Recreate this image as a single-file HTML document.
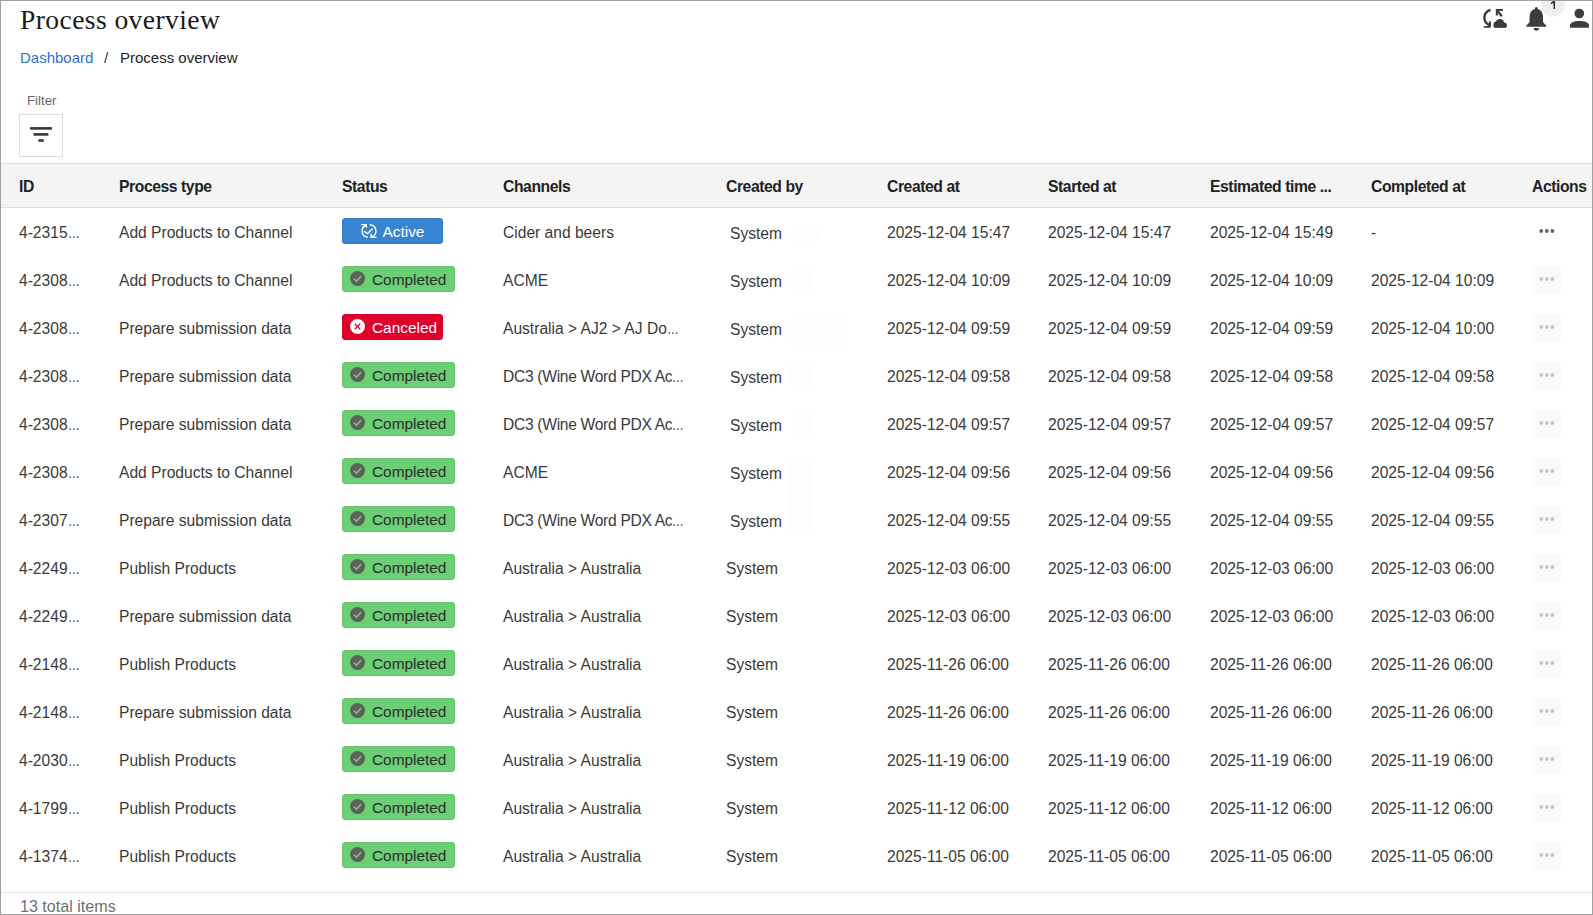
<!DOCTYPE html>
<html><head><meta charset="utf-8">
<style>
*{box-sizing:border-box;margin:0;padding:0}
html,body{width:1593px;height:915px;overflow:hidden;background:#fff}
body{font-family:"Liberation Sans",sans-serif;color:#333;position:relative}
.frame{position:absolute;z-index:10;left:0;top:0;width:1593px;height:915px;border:1px solid #a0a0a0}
.abs{position:absolute;white-space:nowrap}
.title{left:20px;top:3px;font-family:"Liberation Serif",serif;font-size:27.6px;letter-spacing:0.4px;color:#1a1a1a;line-height:34px}
.bc{top:48px;font-size:15px;line-height:20px}
.filterlbl{left:27px;top:92px;font-size:13.3px;color:#666;line-height:18px}
.fbtn{left:19px;top:114px;width:44px;height:43px;border:1px solid #dcdcdc;background:#fff}
.fbtn i{position:absolute;height:2px;background:#3a3a3a}
.thead{left:1px;top:163px;width:1591px;height:45px;background:#f4f4f4;border-top:1px solid #dedede;border-bottom:1px solid #dedede}
.th{top:176px;font-size:15.7px;letter-spacing:-0.42px;font-weight:bold;color:#222;line-height:22px}
.td{font-size:15.6px;color:#3a3a3a;line-height:22px}
.badge{height:26px;border-radius:3px;font-size:15.4px;line-height:24px;padding-left:18px}
.badge .bi{position:absolute;left:18px;top:5px}
.active .bi{left:17px;top:4px}
.badge span{position:absolute;left:38px;top:1px}
.active{background:#3884d0;border:1px solid #2f7bc9;color:#fff}
.active span{left:39.5px}
.done{background:#6ccf76;border:1px solid #63c76d;color:#2b2b2b}
.done .bi{left:7px;top:4px}
.done span{left:29px}
.cancel{background:#e0002b;border:1px solid #d80029;color:#fff}
.cancel .bi{left:7px;top:4px}
.cancel span{left:29px}
.dots{width:30px;height:30px;border-radius:3px}
.dots i{position:absolute;top:13px;width:4px;height:4px;border-radius:50%}
.dots i:nth-child(1){left:9px}.dots i:nth-child(2){left:14px}.dots i:nth-child(3){left:19px}
.dots.dark i{background:#333}
.dots.light{background:#fafafa}
.dots.light i{background:#c8c8c8}
.foot{left:1px;top:892px;width:1591px;height:1px;background:#e0e0e0}
.total{left:20px;top:896px;font-size:16.1px;color:#707070;line-height:20px}
.el{display:inline-block;transform:scaleX(0.75);transform-origin:0 0}
.dc3{letter-spacing:-0.3px}
</style></head><body>

<div class="frame"></div>
<div class="abs title">Process overview</div>
<div class="abs bc" style="left:20px;color:#3371c9">Dashboard</div>
<div class="abs bc" style="left:104px;color:#333">/</div>
<div class="abs bc" style="left:120px;color:#222">Process overview</div>
<div class="abs filterlbl">Filter</div>
<div class="abs fbtn"></div><svg class="abs" style="left:0;top:0" width="70" height="160"><g fill="#363636"><rect x="30.1" y="127.1" width="21.8" height="2.6"/><rect x="33.5" y="133.1" width="14.9" height="2.6"/><rect x="38.4" y="139.2" width="5.3" height="2.6"/></g></svg>
<div class="abs thead"></div>
<div class="abs th" style="left:19px">ID</div>
<div class="abs th" style="left:119px">Process type</div>
<div class="abs th" style="left:342px">Status</div>
<div class="abs th" style="left:503px">Channels</div>
<div class="abs th" style="left:726px">Created by</div>
<div class="abs th" style="left:887px">Created at</div>
<div class="abs th" style="left:1048px">Started at</div>
<div class="abs th" style="left:1210px">Estimated time ...</div>
<div class="abs th" style="left:1371px">Completed at</div>
<div class="abs th" style="left:1532px">Actions</div>
<div class="abs foot"></div>
<div class="abs total">13 total items</div>
<svg class="abs" style="left:1478px;top:0px" width="34" height="34" viewBox="0 0 34 34">
<g fill="#3c3c3c">
<path d="M12.6 10 A7.9 7.9 0 0 0 10.8 24.8" fill="none" stroke="#3c3c3c" stroke-width="2.4"/>
<path d="M5.9 25.9 H10.9 V21.2 H12.8 V27.8 H5.9 Z"/>
<path d="M9.5 25.9 L12.8 22.5 V25.9 Z"/>
<path d="M17.8 9.1 H24.9 V11 H19.8 V15.6 H17.8 Z"/>
<path d="M19.2 10.6 L23.8 16.3" fill="none" stroke="#3c3c3c" stroke-width="2.3"/>
<circle cx="21.9" cy="23.3" r="4.3"/>
<circle cx="18.6" cy="24.6" r="3.1"/>
<circle cx="26.2" cy="25.1" r="2.6"/>
<rect x="15.5" y="24.6" width="13.3" height="3.1" rx="1.4"/>
</g>
</svg>
<svg class="abs" style="left:1520px;top:0px" width="73" height="36" viewBox="0 0 73 36">
<circle cx="33.1" cy="4.5" r="12" fill="#efefef"/>
<path d="M33.6 1 H35 V8.9 H33.6 V2.9 L30.8 4.2 V2.7 Z" fill="#222"/>
<g fill="#3c3c3c">
<path d="M16.3 7 C17.2 7 17.7 7.8 17.8 9.1 C21 9.9 22.9 12.6 23 16.5 V21.5 C23 22.5 24.5 24 26.1 25.3 V26.8 H6.5 V25.3 C8.1 24 9.6 22.5 9.6 21.5 V16.5 C9.7 12.6 11.6 9.9 14.8 9.1 C14.9 7.8 15.4 7 16.3 7 Z"/>
<path d="M13.7 28 H19 A2.65 2.65 0 0 1 13.7 28 Z"/>
<circle cx="59.3" cy="13.5" r="4.8"/>
<path d="M50 27.7 V25.5 C50 22.5 54.5 21.1 59.5 21.1 C64.5 21.1 69 22.5 69 25.5 V27.7 Z"/>
</g>
</svg>

<div class="abs td" style="left:19px;top:222px">4-2315<span class='el'>…</span></div>
<div class="abs td" style="left:119px;top:222px">Add Products to Channel</div>
<div class="abs badge active" style="left:342px;top:218px;width:101px"><svg class="bi" width="18" height="16" viewBox="0 0 18 16"><g fill="none" stroke="#fff" stroke-width="1.5"><path d="M6.4 2.1A6.2 6.2 0 0 0 7.9 14.2"/><path d="M9.6 1.7A6.2 6.2 0 0 1 11.3 13.9"/><path d="M4 8.3L7.6 10.5L12.7 5.6" stroke-width="1.4"/></g><path d="M1.2 0.9H7V4.7H5.6V2.3H1.2Z" fill="#fff"/><path d="M10.4 10.7H11.9V13.5H16.4V15H10.4Z" fill="#fff"/></svg><span>Active</span></div>
<div class="abs td" style="left:503px;top:222px">Cider and beers</div>
<div class="abs td" style="left:730px;top:223px">System</div>
<div class="abs td" style="left:887px;top:222px">2025-12-04 15:47</div>
<div class="abs td" style="left:1048px;top:222px">2025-12-04 15:47</div>
<div class="abs td" style="left:1210px;top:222px">2025-12-04 15:49</div>
<div class="abs td" style="left:1371px;top:222px">-</div>
<svg class="abs" style="left:1532px;top:218px" width="29" height="28"><g fill="#646464"><circle cx="9.2" cy="13" r="1.9"/><circle cx="14.8" cy="13" r="1.9"/><circle cx="20.4" cy="13" r="1.9"/></g></svg>
<div class="abs td" style="left:19px;top:270px">4-2308<span class='el'>…</span></div>
<div class="abs td" style="left:119px;top:270px">Add Products to Channel</div>
<div class="abs badge done" style="left:342px;top:266px;width:113px"><svg class="bi" width="15" height="15" viewBox="0 0 15 15"><circle cx="7.5" cy="7.5" r="7.5" fill="#5f5f5f"/><path d="M3.9 7.6l2.5 2.5 4.8-4.8" fill="none" stroke="#6ccf76" stroke-width="1.6"/></svg><span>Completed</span></div>
<div class="abs td" style="left:503px;top:270px">ACME</div>
<div class="abs td" style="left:730px;top:271px">System</div>
<div class="abs td" style="left:887px;top:270px">2025-12-04 10:09</div>
<div class="abs td" style="left:1048px;top:270px">2025-12-04 10:09</div>
<div class="abs td" style="left:1210px;top:270px">2025-12-04 10:09</div>
<div class="abs td" style="left:1371px;top:270px">2025-12-04 10:09</div>
<svg class="abs" style="left:1532px;top:266px" width="29" height="28"><rect x="0" y="0" width="29" height="28" rx="3" fill="#fafafa"/><g fill="#c6c6c6"><circle cx="9.2" cy="13" r="1.9"/><circle cx="14.8" cy="13" r="1.9"/><circle cx="20.4" cy="13" r="1.9"/></g></svg>
<div class="abs td" style="left:19px;top:318px">4-2308<span class='el'>…</span></div>
<div class="abs td" style="left:119px;top:318px">Prepare submission data</div>
<div class="abs badge cancel" style="left:342px;top:314px;width:101px"><svg class="bi" width="15" height="15" viewBox="0 0 15 15"><circle cx="7.5" cy="7.5" r="7.5" fill="#fff"/><path d="M4.8 4.8l5.4 5.4M10.2 4.8l-5.4 5.4" fill="none" stroke="#e0002b" stroke-width="1.3"/></svg><span>Canceled</span></div>
<div class="abs td" style="left:503px;top:318px">Australia &gt; AJ2 &gt; AJ Do<span class='el'>…</span></div>
<div class="abs td" style="left:730px;top:319px">System</div>
<div class="abs td" style="left:887px;top:318px">2025-12-04 09:59</div>
<div class="abs td" style="left:1048px;top:318px">2025-12-04 09:59</div>
<div class="abs td" style="left:1210px;top:318px">2025-12-04 09:59</div>
<div class="abs td" style="left:1371px;top:318px">2025-12-04 10:00</div>
<svg class="abs" style="left:1532px;top:314px" width="29" height="28"><rect x="0" y="0" width="29" height="28" rx="3" fill="#fafafa"/><g fill="#c6c6c6"><circle cx="9.2" cy="13" r="1.9"/><circle cx="14.8" cy="13" r="1.9"/><circle cx="20.4" cy="13" r="1.9"/></g></svg>
<div class="abs td" style="left:19px;top:366px">4-2308<span class='el'>…</span></div>
<div class="abs td" style="left:119px;top:366px">Prepare submission data</div>
<div class="abs badge done" style="left:342px;top:362px;width:113px"><svg class="bi" width="15" height="15" viewBox="0 0 15 15"><circle cx="7.5" cy="7.5" r="7.5" fill="#5f5f5f"/><path d="M3.9 7.6l2.5 2.5 4.8-4.8" fill="none" stroke="#6ccf76" stroke-width="1.6"/></svg><span>Completed</span></div>
<div class="abs td" style="left:503px;top:366px"><span class='dc3'>DC3 (Wine Word PDX Ac</span><span class='el'>…</span></div>
<div class="abs td" style="left:730px;top:367px">System</div>
<div class="abs td" style="left:887px;top:366px">2025-12-04 09:58</div>
<div class="abs td" style="left:1048px;top:366px">2025-12-04 09:58</div>
<div class="abs td" style="left:1210px;top:366px">2025-12-04 09:58</div>
<div class="abs td" style="left:1371px;top:366px">2025-12-04 09:58</div>
<svg class="abs" style="left:1532px;top:362px" width="29" height="28"><rect x="0" y="0" width="29" height="28" rx="3" fill="#fafafa"/><g fill="#c6c6c6"><circle cx="9.2" cy="13" r="1.9"/><circle cx="14.8" cy="13" r="1.9"/><circle cx="20.4" cy="13" r="1.9"/></g></svg>
<div class="abs td" style="left:19px;top:414px">4-2308<span class='el'>…</span></div>
<div class="abs td" style="left:119px;top:414px">Prepare submission data</div>
<div class="abs badge done" style="left:342px;top:410px;width:113px"><svg class="bi" width="15" height="15" viewBox="0 0 15 15"><circle cx="7.5" cy="7.5" r="7.5" fill="#5f5f5f"/><path d="M3.9 7.6l2.5 2.5 4.8-4.8" fill="none" stroke="#6ccf76" stroke-width="1.6"/></svg><span>Completed</span></div>
<div class="abs td" style="left:503px;top:414px"><span class='dc3'>DC3 (Wine Word PDX Ac</span><span class='el'>…</span></div>
<div class="abs td" style="left:730px;top:415px">System</div>
<div class="abs td" style="left:887px;top:414px">2025-12-04 09:57</div>
<div class="abs td" style="left:1048px;top:414px">2025-12-04 09:57</div>
<div class="abs td" style="left:1210px;top:414px">2025-12-04 09:57</div>
<div class="abs td" style="left:1371px;top:414px">2025-12-04 09:57</div>
<svg class="abs" style="left:1532px;top:410px" width="29" height="28"><rect x="0" y="0" width="29" height="28" rx="3" fill="#fafafa"/><g fill="#c6c6c6"><circle cx="9.2" cy="13" r="1.9"/><circle cx="14.8" cy="13" r="1.9"/><circle cx="20.4" cy="13" r="1.9"/></g></svg>
<div class="abs td" style="left:19px;top:462px">4-2308<span class='el'>…</span></div>
<div class="abs td" style="left:119px;top:462px">Add Products to Channel</div>
<div class="abs badge done" style="left:342px;top:458px;width:113px"><svg class="bi" width="15" height="15" viewBox="0 0 15 15"><circle cx="7.5" cy="7.5" r="7.5" fill="#5f5f5f"/><path d="M3.9 7.6l2.5 2.5 4.8-4.8" fill="none" stroke="#6ccf76" stroke-width="1.6"/></svg><span>Completed</span></div>
<div class="abs td" style="left:503px;top:462px">ACME</div>
<div class="abs td" style="left:730px;top:463px">System</div>
<div class="abs td" style="left:887px;top:462px">2025-12-04 09:56</div>
<div class="abs td" style="left:1048px;top:462px">2025-12-04 09:56</div>
<div class="abs td" style="left:1210px;top:462px">2025-12-04 09:56</div>
<div class="abs td" style="left:1371px;top:462px">2025-12-04 09:56</div>
<svg class="abs" style="left:1532px;top:458px" width="29" height="28"><rect x="0" y="0" width="29" height="28" rx="3" fill="#fafafa"/><g fill="#c6c6c6"><circle cx="9.2" cy="13" r="1.9"/><circle cx="14.8" cy="13" r="1.9"/><circle cx="20.4" cy="13" r="1.9"/></g></svg>
<div class="abs td" style="left:19px;top:510px">4-2307<span class='el'>…</span></div>
<div class="abs td" style="left:119px;top:510px">Prepare submission data</div>
<div class="abs badge done" style="left:342px;top:506px;width:113px"><svg class="bi" width="15" height="15" viewBox="0 0 15 15"><circle cx="7.5" cy="7.5" r="7.5" fill="#5f5f5f"/><path d="M3.9 7.6l2.5 2.5 4.8-4.8" fill="none" stroke="#6ccf76" stroke-width="1.6"/></svg><span>Completed</span></div>
<div class="abs td" style="left:503px;top:510px"><span class='dc3'>DC3 (Wine Word PDX Ac</span><span class='el'>…</span></div>
<div class="abs td" style="left:730px;top:511px">System</div>
<div class="abs td" style="left:887px;top:510px">2025-12-04 09:55</div>
<div class="abs td" style="left:1048px;top:510px">2025-12-04 09:55</div>
<div class="abs td" style="left:1210px;top:510px">2025-12-04 09:55</div>
<div class="abs td" style="left:1371px;top:510px">2025-12-04 09:55</div>
<svg class="abs" style="left:1532px;top:506px" width="29" height="28"><rect x="0" y="0" width="29" height="28" rx="3" fill="#fafafa"/><g fill="#c6c6c6"><circle cx="9.2" cy="13" r="1.9"/><circle cx="14.8" cy="13" r="1.9"/><circle cx="20.4" cy="13" r="1.9"/></g></svg>
<div class="abs td" style="left:19px;top:558px">4-2249<span class='el'>…</span></div>
<div class="abs td" style="left:119px;top:558px">Publish Products</div>
<div class="abs badge done" style="left:342px;top:554px;width:113px"><svg class="bi" width="15" height="15" viewBox="0 0 15 15"><circle cx="7.5" cy="7.5" r="7.5" fill="#5f5f5f"/><path d="M3.9 7.6l2.5 2.5 4.8-4.8" fill="none" stroke="#6ccf76" stroke-width="1.6"/></svg><span>Completed</span></div>
<div class="abs td" style="left:503px;top:558px">Australia &gt; Australia</div>
<div class="abs td" style="left:726px;top:558px">System</div>
<div class="abs td" style="left:887px;top:558px">2025-12-03 06:00</div>
<div class="abs td" style="left:1048px;top:558px">2025-12-03 06:00</div>
<div class="abs td" style="left:1210px;top:558px">2025-12-03 06:00</div>
<div class="abs td" style="left:1371px;top:558px">2025-12-03 06:00</div>
<svg class="abs" style="left:1532px;top:554px" width="29" height="28"><rect x="0" y="0" width="29" height="28" rx="3" fill="#fafafa"/><g fill="#c6c6c6"><circle cx="9.2" cy="13" r="1.9"/><circle cx="14.8" cy="13" r="1.9"/><circle cx="20.4" cy="13" r="1.9"/></g></svg>
<div class="abs td" style="left:19px;top:606px">4-2249<span class='el'>…</span></div>
<div class="abs td" style="left:119px;top:606px">Prepare submission data</div>
<div class="abs badge done" style="left:342px;top:602px;width:113px"><svg class="bi" width="15" height="15" viewBox="0 0 15 15"><circle cx="7.5" cy="7.5" r="7.5" fill="#5f5f5f"/><path d="M3.9 7.6l2.5 2.5 4.8-4.8" fill="none" stroke="#6ccf76" stroke-width="1.6"/></svg><span>Completed</span></div>
<div class="abs td" style="left:503px;top:606px">Australia &gt; Australia</div>
<div class="abs td" style="left:726px;top:606px">System</div>
<div class="abs td" style="left:887px;top:606px">2025-12-03 06:00</div>
<div class="abs td" style="left:1048px;top:606px">2025-12-03 06:00</div>
<div class="abs td" style="left:1210px;top:606px">2025-12-03 06:00</div>
<div class="abs td" style="left:1371px;top:606px">2025-12-03 06:00</div>
<svg class="abs" style="left:1532px;top:602px" width="29" height="28"><rect x="0" y="0" width="29" height="28" rx="3" fill="#fafafa"/><g fill="#c6c6c6"><circle cx="9.2" cy="13" r="1.9"/><circle cx="14.8" cy="13" r="1.9"/><circle cx="20.4" cy="13" r="1.9"/></g></svg>
<div class="abs td" style="left:19px;top:654px">4-2148<span class='el'>…</span></div>
<div class="abs td" style="left:119px;top:654px">Publish Products</div>
<div class="abs badge done" style="left:342px;top:650px;width:113px"><svg class="bi" width="15" height="15" viewBox="0 0 15 15"><circle cx="7.5" cy="7.5" r="7.5" fill="#5f5f5f"/><path d="M3.9 7.6l2.5 2.5 4.8-4.8" fill="none" stroke="#6ccf76" stroke-width="1.6"/></svg><span>Completed</span></div>
<div class="abs td" style="left:503px;top:654px">Australia &gt; Australia</div>
<div class="abs td" style="left:726px;top:654px">System</div>
<div class="abs td" style="left:887px;top:654px">2025-11-26 06:00</div>
<div class="abs td" style="left:1048px;top:654px">2025-11-26 06:00</div>
<div class="abs td" style="left:1210px;top:654px">2025-11-26 06:00</div>
<div class="abs td" style="left:1371px;top:654px">2025-11-26 06:00</div>
<svg class="abs" style="left:1532px;top:650px" width="29" height="28"><rect x="0" y="0" width="29" height="28" rx="3" fill="#fafafa"/><g fill="#c6c6c6"><circle cx="9.2" cy="13" r="1.9"/><circle cx="14.8" cy="13" r="1.9"/><circle cx="20.4" cy="13" r="1.9"/></g></svg>
<div class="abs td" style="left:19px;top:702px">4-2148<span class='el'>…</span></div>
<div class="abs td" style="left:119px;top:702px">Prepare submission data</div>
<div class="abs badge done" style="left:342px;top:698px;width:113px"><svg class="bi" width="15" height="15" viewBox="0 0 15 15"><circle cx="7.5" cy="7.5" r="7.5" fill="#5f5f5f"/><path d="M3.9 7.6l2.5 2.5 4.8-4.8" fill="none" stroke="#6ccf76" stroke-width="1.6"/></svg><span>Completed</span></div>
<div class="abs td" style="left:503px;top:702px">Australia &gt; Australia</div>
<div class="abs td" style="left:726px;top:702px">System</div>
<div class="abs td" style="left:887px;top:702px">2025-11-26 06:00</div>
<div class="abs td" style="left:1048px;top:702px">2025-11-26 06:00</div>
<div class="abs td" style="left:1210px;top:702px">2025-11-26 06:00</div>
<div class="abs td" style="left:1371px;top:702px">2025-11-26 06:00</div>
<svg class="abs" style="left:1532px;top:698px" width="29" height="28"><rect x="0" y="0" width="29" height="28" rx="3" fill="#fafafa"/><g fill="#c6c6c6"><circle cx="9.2" cy="13" r="1.9"/><circle cx="14.8" cy="13" r="1.9"/><circle cx="20.4" cy="13" r="1.9"/></g></svg>
<div class="abs td" style="left:19px;top:750px">4-2030<span class='el'>…</span></div>
<div class="abs td" style="left:119px;top:750px">Publish Products</div>
<div class="abs badge done" style="left:342px;top:746px;width:113px"><svg class="bi" width="15" height="15" viewBox="0 0 15 15"><circle cx="7.5" cy="7.5" r="7.5" fill="#5f5f5f"/><path d="M3.9 7.6l2.5 2.5 4.8-4.8" fill="none" stroke="#6ccf76" stroke-width="1.6"/></svg><span>Completed</span></div>
<div class="abs td" style="left:503px;top:750px">Australia &gt; Australia</div>
<div class="abs td" style="left:726px;top:750px">System</div>
<div class="abs td" style="left:887px;top:750px">2025-11-19 06:00</div>
<div class="abs td" style="left:1048px;top:750px">2025-11-19 06:00</div>
<div class="abs td" style="left:1210px;top:750px">2025-11-19 06:00</div>
<div class="abs td" style="left:1371px;top:750px">2025-11-19 06:00</div>
<svg class="abs" style="left:1532px;top:746px" width="29" height="28"><rect x="0" y="0" width="29" height="28" rx="3" fill="#fafafa"/><g fill="#c6c6c6"><circle cx="9.2" cy="13" r="1.9"/><circle cx="14.8" cy="13" r="1.9"/><circle cx="20.4" cy="13" r="1.9"/></g></svg>
<div class="abs td" style="left:19px;top:798px">4-1799<span class='el'>…</span></div>
<div class="abs td" style="left:119px;top:798px">Publish Products</div>
<div class="abs badge done" style="left:342px;top:794px;width:113px"><svg class="bi" width="15" height="15" viewBox="0 0 15 15"><circle cx="7.5" cy="7.5" r="7.5" fill="#5f5f5f"/><path d="M3.9 7.6l2.5 2.5 4.8-4.8" fill="none" stroke="#6ccf76" stroke-width="1.6"/></svg><span>Completed</span></div>
<div class="abs td" style="left:503px;top:798px">Australia &gt; Australia</div>
<div class="abs td" style="left:726px;top:798px">System</div>
<div class="abs td" style="left:887px;top:798px">2025-11-12 06:00</div>
<div class="abs td" style="left:1048px;top:798px">2025-11-12 06:00</div>
<div class="abs td" style="left:1210px;top:798px">2025-11-12 06:00</div>
<div class="abs td" style="left:1371px;top:798px">2025-11-12 06:00</div>
<svg class="abs" style="left:1532px;top:794px" width="29" height="28"><rect x="0" y="0" width="29" height="28" rx="3" fill="#fafafa"/><g fill="#c6c6c6"><circle cx="9.2" cy="13" r="1.9"/><circle cx="14.8" cy="13" r="1.9"/><circle cx="20.4" cy="13" r="1.9"/></g></svg>
<div class="abs td" style="left:19px;top:846px">4-1374<span class='el'>…</span></div>
<div class="abs td" style="left:119px;top:846px">Publish Products</div>
<div class="abs badge done" style="left:342px;top:842px;width:113px"><svg class="bi" width="15" height="15" viewBox="0 0 15 15"><circle cx="7.5" cy="7.5" r="7.5" fill="#5f5f5f"/><path d="M3.9 7.6l2.5 2.5 4.8-4.8" fill="none" stroke="#6ccf76" stroke-width="1.6"/></svg><span>Completed</span></div>
<div class="abs td" style="left:503px;top:846px">Australia &gt; Australia</div>
<div class="abs td" style="left:726px;top:846px">System</div>
<div class="abs td" style="left:887px;top:846px">2025-11-05 06:00</div>
<div class="abs td" style="left:1048px;top:846px">2025-11-05 06:00</div>
<div class="abs td" style="left:1210px;top:846px">2025-11-05 06:00</div>
<div class="abs td" style="left:1371px;top:846px">2025-11-05 06:00</div>
<svg class="abs" style="left:1532px;top:842px" width="29" height="28"><rect x="0" y="0" width="29" height="28" rx="3" fill="#fafafa"/><g fill="#c6c6c6"><circle cx="9.2" cy="13" r="1.9"/><circle cx="14.8" cy="13" r="1.9"/><circle cx="20.4" cy="13" r="1.9"/></g></svg>
<div class="abs" style="left:791px;top:226px;width:30px;height:15px;background:#fdfdfd"></div>
<div class="abs" style="left:791px;top:267px;width:22px;height:23px;background:#fdfdfd"></div>
<div class="abs" style="left:791px;top:319px;width:57px;height:28px;background:#fdfdfd"></div>
<div class="abs" style="left:789px;top:364px;width:24px;height:22px;background:#fdfdfd"></div>
<div class="abs" style="left:793px;top:412px;width:20px;height:22px;background:#fdfdfd"></div>
<div class="abs" style="left:789px;top:457px;width:24px;height:75px;background:#fdfdfd"></div>

</body></html>
